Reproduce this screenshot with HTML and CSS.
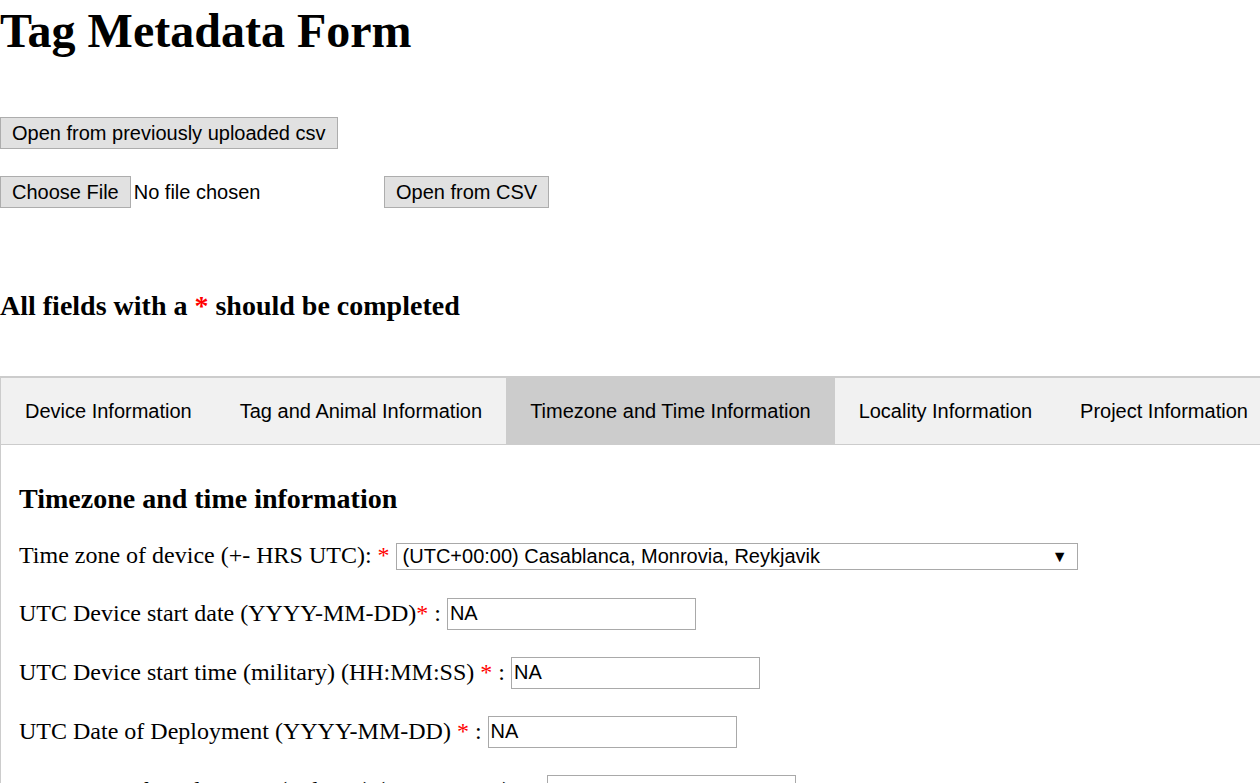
FILE: index.html
```html
<!DOCTYPE html>
<html>
<head>
<meta charset="utf-8">
<title>Tag Metadata Form</title>
<link rel="stylesheet" href="styles.css">
</head>
<body>
<h1 class="title">Tag Metadata Form</h1>
<div class="row row-first">
  <button class="btn" type="button">Open from previously uploaded csv</button>
</div>
<div class="row row-file">
  <span class="file-widget"><button class="btn" type="button">Choose File</button><span class="file-name">No file chosen</span></span>
  <button class="btn" type="button">Open from CSV</button>
</div>
<h3 class="notice">All fields with a <span class="req">*</span> should be completed</h3>
<div class="tabs">
  <button class="tab" type="button">Device Information</button>
  <button class="tab" type="button">Tag and Animal Information</button>
  <button class="tab active" type="button">Timezone and Time Information</button>
  <button class="tab" type="button">Locality Information</button>
  <button class="tab" type="button">Project Information</button>
</div>
<div class="panel">
  <h3 class="panel-title">Timezone and time information</h3>
  <p class="field field-first">Time zone of device (+- HRS UTC): <span class="req">*</span> <span class="select"><span class="select-text">(UTC+00:00) Casablanca, Monrovia, Reykjavik</span><span class="arrow">&#9660;</span></span></p>
  <p class="field field-second">UTC Device start date (YYYY-MM-DD)<span class="req">*</span> : <input class="text-input" type="text" value="NA"></p>
  <p class="field">UTC Device start time (military) (HH:MM:SS) <span class="req">*</span> : <input class="text-input" type="text" value="NA"></p>
  <p class="field">UTC Date of Deployment (YYYY-MM-DD) <span class="req">*</span> : <input class="text-input" type="text" value="NA"></p>
  <p class="field">UTC Time of Deployment (military) (HH:MM:SS) <span class="req">*</span> : <input class="text-input" type="text" value="NA"></p>
</div>
</body>
</html>
```
FILE: styles.css
```css
html, body {
  margin: 0;
  padding: 0;
  background: #fff;
  color: #000;
  font-family: "Liberation Serif", "Times New Roman", serif;
  overflow: hidden;
}

.title {
  font-size: 48px;
  font-weight: bold;
  margin: 0;
  padding-top: 3px;
  line-height: 55px;
}

.row {
  display: flex;
  align-items: center;
}

.row-first {
  margin-top: 59px;
}

.row-file {
  margin-top: 27px;
}

.btn {
  font-family: "Liberation Sans", Arial, sans-serif;
  font-size: 20px;
  color: #000;
  height: 32px;
  padding: 0 11px;
  background: #e1e1e1;
  border: 1px solid #adadad;
  border-radius: 0;
  line-height: 30px;
  margin: 0;
}

.file-widget {
  display: inline-flex;
  align-items: center;
  width: 384px;
}

.file-name {
  font-family: "Liberation Sans", Arial, sans-serif;
  font-size: 20px;
  margin-left: 3px;
}

.notice {
  font-size: 28px;
  font-weight: bold;
  margin: 82px 0 0 0;
  line-height: 32px;
}

.req {
  color: #f00;
}

.tabs {
  margin-top: 54px;
  display: flex;
  background: #f1f1f1;
  border: 2px solid #ccc;
  border-bottom-width: 1px;
  border-right: none;
  border-left-width: 1px;
}

.tab {
  font-family: "Liberation Sans", Arial, sans-serif;
  font-size: 20px;
  color: #000;
  background: transparent;
  border: none;
  padding: 22px 24px 21px 24px;
  line-height: 23px;
  margin: 0;
  white-space: nowrap;
  flex: none;
}

.tab.active {
  background: #ccc;
}

.panel {
  border-left: 1px solid #ccc;
  padding: 6px 18px;
  min-height: 400px;
}

.panel-title {
  font-size: 28px;
  font-weight: bold;
  margin: 32px 0 0 0;
  line-height: 32px;
}

.field {
  font-size: 24px;
  margin: 24px 0 0 0;
  line-height: 35px;
  white-space: nowrap;
}

.field.field-first {
  margin-top: 23px;
}

.field.field-second {
  margin-top: 23px;
}

.select {
  display: inline-flex;
  align-items: center;
  justify-content: space-between;
  box-sizing: border-box;
  width: 682px;
  height: 27px;
  border: 1px solid #a9a9a9;
  padding: 0 9px 0 6px;
  font-family: "Liberation Sans", Arial, sans-serif;
  font-size: 20px;
  line-height: 25px;
  vertical-align: baseline;
}

.arrow {
  font-size: 16px;
}

.text-input {
  box-sizing: border-box;
  width: 249px;
  height: 32px;
  border: 1px solid #a9a9a9;
  border-radius: 0;
  padding: 0 2px;
  margin: 0;
  font-family: "Liberation Sans", Arial, sans-serif;
  font-size: 20px;
  color: #000;
  vertical-align: 1px;
  outline: none;
}
```
